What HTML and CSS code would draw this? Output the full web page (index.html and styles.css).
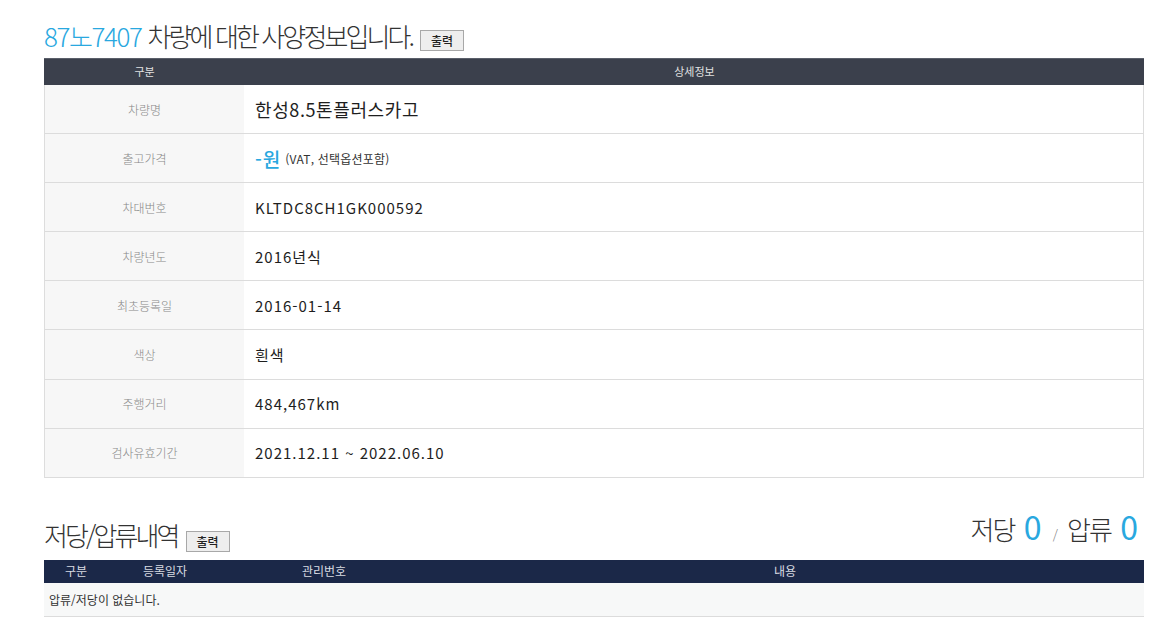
FILE: index.html
```html
<!DOCTYPE html>
<html lang="ko">
<head>
<meta charset="utf-8">
<link rel="stylesheet" href="styles.css">
</head>
<body>
<div class="page">
  <div class="title-row">
    <h1 class="title"><span class="blue">87노7407</span> <span class="ko">차량에 대한 사양정보입니다.</span></h1>
    <button class="btn">출력</button>
  </div>
  <div class="spec">
    <div class="spec-head">
      <div class="c-label">구분</div>
      <div class="c-value">상세정보</div>
    </div>
    <div class="spec-row"><div class="c-label">차량명</div><div class="c-value big">한성8.5톤플러스카고</div></div>
    <div class="spec-row"><div class="c-label">출고가격</div><div class="c-value"><span class="price">-원</span> <span class="note">(VAT, 선택옵션포함)</span></div></div>
    <div class="spec-row"><div class="c-label">차대번호</div><div class="c-value">KLTDC8CH1GK000592</div></div>
    <div class="spec-row"><div class="c-label">차량년도</div><div class="c-value">2016년식</div></div>
    <div class="spec-row"><div class="c-label">최초등록일</div><div class="c-value">2016-01-14</div></div>
    <div class="spec-row"><div class="c-label">색상</div><div class="c-value">흰색</div></div>
    <div class="spec-row"><div class="c-label">주행거리</div><div class="c-value">484,467km</div></div>
    <div class="spec-row"><div class="c-label">검사유효기간</div><div class="c-value">2021.12.11 ~ 2022.06.10</div></div>
  </div>

  <div class="sec2-row">
    <div class="sec2-left">
      <h2 class="title ko">저당/압류내역</h2>
      <button class="btn">출력</button>
    </div>
    <div class="counts"><span class="ko">저당</span> <span class="num">0</span> <span class="slash">/</span> <span class="ko">압류</span> <span class="num">0</span></div>
  </div>
  <div class="lien">
    <div class="lien-head">
      <div class="l1">구분</div>
      <div class="l2">등록일자</div>
      <div class="l3">관리번호</div>
      <div class="l4">내용</div>
    </div>
    <div class="lien-row">압류/저당이 없습니다.</div>
  </div>
</div>
</body>
</html>
```

FILE: styles.css
```css
* { box-sizing: border-box; }
body {
  margin: 0;
  background: #fff;
  font-family: "Noto Sans CJK KR", "Noto Sans", sans-serif;
  color: #333;
}
.page {
  width: 1100px;
  margin-left: 44px;
}
.title-row {
  display: flex;
  align-items: flex-end;
  height: 58px;
  padding-bottom: 6px;
}
.title {
  margin: 0;
  font-size: 26px;
  font-weight: 300;
  letter-spacing: -1.4px;
  line-height: 32px;
  color: #333;
}
.title .ko, .title.ko { letter-spacing: -2.9px; }
.blue { color: #29a8df; }
.btn {
  margin-left: 8px;
  margin-bottom: 1px;
  width: 44px;
  height: 21px;
  padding: 0;
  background: #eeeeee;
  border: 1px solid #a8a8a8;
  font-family: "Noto Sans CJK KR", sans-serif;
  font-size: 12px;
  font-weight: 500;
  color: #222;
  line-height: 19px;
}
.spec {
  border-left: 1px solid #ddd;
  border-right: 1px solid #ddd;
}
.spec-head {
  display: flex;
  height: 27px;
  background: #3b404c;
  border-top: 1px solid #5a5f6a;
  margin-left: -1px;
  margin-right: -1px;
  color: #e2e2e2;
  font-size: 11px;
  line-height: 24px;
}
.spec-head .c-label { width: 201px; text-align: center; }
.spec-head .c-value { flex: 1; text-align: center; }
.spec-row {
  display: flex;
  height: 49.1px;
  border-bottom: 1px solid #dcdcdc;
}
.spec-row .c-label {
  width: 199px;
  background: #f7f7f7;
  text-align: center;
  font-size: 12px;
  font-weight: 300;
  color: #888;
  display: flex;
  align-items: center;
  justify-content: center;
}
.spec-row .c-value {
  flex: 1;
  padding-left: 11px;
  display: flex;
  align-items: center;
  font-size: 15px;
  font-weight: 400;
  color: #1e1e1e;
  letter-spacing: 1px;
}
.spec-row .c-value.big { font-size: 18px; font-weight: 400; letter-spacing: 0.6px; }
.price {
  color: #29a8df;
  font-size: 19px;
  font-weight: 500;
  letter-spacing: 1px;
  margin-right: 4px;
}
.note { font-size: 12px; color: #333; font-weight: 400; letter-spacing: 0.2px; }
.sec2-row {
  display: flex;
  justify-content: space-between;
  align-items: flex-end;
  margin-top: 38px;
  height: 44px;
  padding-bottom: 9px;
}
.sec2-left {
  display: flex;
  align-items: flex-end;
}
.sec2-left .btn { margin-left: 8px; margin-bottom: -1px; }
.counts {
  font-size: 26px;
  font-weight: 300;
  line-height: 32px;
  color: #333;
  padding-right: 4px;
}
.counts .ko { letter-spacing: -2px; }
.counts .num { color: #29a8df; font-size: 32px; font-weight: 400; margin: 0 2px; }
.counts .slash { font-size: 13px; color: #777; margin: 0 2px; }
.lien-head {
  display: flex;
  height: 23px;
  background: #1b2848;
  color: #d8dbe2;
  font-size: 12px;
  line-height: 21px;
}
.lien-head div { text-align: center; }
.l1 { width: 64px; }
.l2 { width: 114px; }
.l3 { width: 204px; }
.l4 { flex: 1; }
.lien-row {
  height: 34px;
  background: #f7f8f8;
  border-bottom: 1px solid #dcdcdc;
  padding-left: 5px;
  font-size: 12px;
  line-height: 33px;
  color: #333;
}
```
